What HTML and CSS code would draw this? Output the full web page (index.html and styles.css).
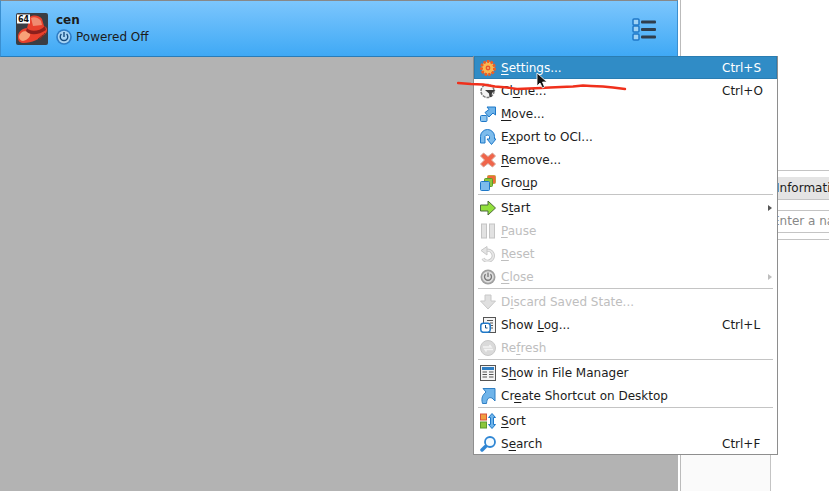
FILE: index.html
```html
<!DOCTYPE html>
<html lang="en">
<head>
  <meta charset="UTF-8">
  <title>VirtualBox Manager</title>
  <link rel="stylesheet" href="styles.css">
</head>
<body>

  <div class="window">
    <div class="left-pane">
      <div class="vm-row">
        <svg class="os-icon" width="32" height="32" viewBox="0 0 32 32">
          <rect width="32" height="32" rx="2" fill="#3a3d44"/>
          <path d="M2 25 C1 19 7 15 11 15 L14 4 C18 1 24 3 26 6 L28 13 C31 14 32 17 30 20 C25 26 15 30 8 30 C4 30 2 28 2 25Z" fill="#e8402c"/>
          <path d="M15 5 C18 3 23 5 25 8 L26 12 L17 13Z" fill="#f08a70"/>
          <path d="M3 24 C4 18 10 17 14 20 C15 23 12 27 7 28 C5 28 3 26 3 24Z" fill="#f8a078"/>
          <path d="M11 15 C14 19 23 19 29 13 L30 17 C23 22 14 23 10 18Z" fill="#8c1f1c"/>
          <path d="M22 26 L27 22 M24 27 L29 20" stroke="#7a2a24" stroke-width="1"/>
          <rect x="1" y="1.500" width="13" height="9" fill="#fff"/>
          <text class="os-badge" x="7.500" y="9">64</text>
        </svg>
        <div class="vm-info">
          <div class="vm-name">cen</div>
          <div class="vm-state">
            <svg width="16" height="16" viewBox="0 0 16 16">
              <circle cx="8" cy="8" r="7.800" fill="#2f7cc4"/>
              <circle cx="8" cy="8" r="6.200" fill="#a8d4f4"/>
              <path d="M5.400 5 A3.800 3.800 0 1 0 10.600 5 M8 3 V8" fill="none" stroke="#164a7c" stroke-width="1.400"/>
            </svg>
            <span>Powered Off</span>
          </div>
        </div>
        <svg class="tools-icon" width="24" height="24" viewBox="0 0 24 24">
          <g fill="#9fd2f5" stroke="#1f78c8" stroke-width="1.500">
            <rect x="1" y="2" width="6" height="6" rx="1"/>
            <rect x="1" y="9" width="6" height="6" rx="1"/>
            <rect x="1" y="17" width="6" height="6" rx="1"/>
          </g>
          <g fill="#2f3d4c">
            <rect x="9" y="3.500" width="15" height="3" rx="1"/>
            <rect x="9" y="11" width="15" height="3" rx="1"/>
            <rect x="9" y="18.500" width="15" height="3" rx="1"/>
          </g>
        </svg>
      </div>
      <div class="vm-empty"></div>
    </div>

    <div class="right-pane">
      <div class="tab-rule"></div>
      <div class="tab-strip">Information</div>
      <div class="name-field">Enter a name</div>
      <div class="details-rule"></div>
      <div class="details-box"></div>
    </div>
  </div>

  <div class="menu">
    <div class="item active">
      <svg class="ico" viewBox="0 0 16 16">
        <circle cx="8" cy="8" r="6.500" fill="#f9c468" stroke="#ee5f24" stroke-width="3" stroke-dasharray="2.500 1.100"/>
        <circle cx="8" cy="8" r="5" fill="#f8b850"/>
        <circle cx="8" cy="8" r="2.400" fill="#e9532a"/>
        <circle cx="8" cy="8" r="0.900" fill="#f9c468"/>
      </svg>
      <span class="label"><u>S</u>ettings...</span><span class="key">Ctrl+S</span>
    </div>
    <div class="item">
      <svg class="ico" viewBox="0 0 16 16">
        <circle cx="7.500" cy="8" r="6.500" fill="#f4f4f4" stroke="#7c7c7c" stroke-width="1.500" stroke-dasharray="3 1"/>
        <path d="M5 7 H15.500 L12 10 L11.500 14 H9.500 L9 10.500Z" fill="#3a3a3a"/>
      </svg>
      <span class="label">Cl<u>o</u>ne...</span><span class="key">Ctrl+O</span>
    </div>
    <div class="item">
      <svg class="ico" viewBox="0 0 16 16">
        <rect x="0.500" y="9.500" width="6.500" height="6" rx="1" fill="#8cc4ee" stroke="#1f78c8"/>
        <path d="M5 6.500 L9 3.500 L7 1 H15.500 V9 L13 7 L9 11Z" fill="#6fb4ea" stroke="#1f78c8"/>
      </svg>
      <span class="label"><u>M</u>ove...</span>
    </div>
    <div class="item">
      <svg class="ico" viewBox="0 0 16 16">
        <path d="M0.500 14 V7.500 A7 7 0 0 1 14.500 7.500 V10 H16 L11.500 15.500 L7 10 H9.500 V7.500 A2.500 2.500 0 0 0 5 7.500 V14Z" fill="#7dbcec" stroke="#1f78c8"/>
      </svg>
      <span class="label">E<u>x</u>port to OCI...</span>
    </div>
    <div class="item">
      <svg class="ico" viewBox="0 0 16 16">
        <path d="M3.500 1 L8 4.500 L12.500 1 L15.500 4 L11.500 8 L15.500 12 L12.500 15 L8 11.500 L3.500 15 L0.500 12 L4.500 8 L0.500 4Z" fill="#f0654a" stroke="#d8a698"/>
      </svg>
      <span class="label"><u>R</u>emove...</span>
    </div>
    <div class="item">
      <svg class="ico" viewBox="0 0 16 16">
        <rect x="7.500" y="0.500" width="8" height="8" rx="1" fill="#f06a3c" stroke="#c8a040"/>
        <rect x="4.500" y="3.500" width="8" height="8" rx="1" fill="#8cc63c" stroke="#5d9a2c"/>
        <rect x="0.500" y="6.500" width="9" height="9" rx="1" fill="#7dbcec" stroke="#1f78c8"/>
      </svg>
      <span class="label">Gro<u>u</u>p</span>
    </div>
    <div class="sep"></div>
    <div class="item">
      <svg class="ico" viewBox="0 0 16 16">
        <path d="M0.500 5 H8 V1 L15.500 8 L8 15 V11 H0.500Z" fill="#92e03c" stroke="#4d6a3a"/>
      </svg>
      <span class="label">S<u>t</u>art</span><span class="sub"></span>
    </div>
    <div class="item off">
      <svg class="ico" viewBox="0 0 16 16">
        <rect x="1.500" y="1" width="5" height="14" fill="#e2e2e2" stroke="#c4c4c4"/>
        <rect x="9.500" y="1" width="5" height="14" fill="#e2e2e2" stroke="#c4c4c4"/>
      </svg>
      <span class="label"><u>P</u>ause</span>
    </div>
    <div class="item off">
      <svg class="ico" viewBox="0 0 16 16">
        <path d="M6 4.500 A5.500 5.500 0 1 1 3 12.500" fill="none" stroke="#c8c8c8" stroke-width="3.400"/>
        <path d="M6 4.500 A5.500 5.500 0 1 1 3 12.500" fill="none" stroke="#e8e8e8" stroke-width="1.600"/>
        <path d="M7 0.500 V9 L1 4.500Z" fill="#e4e4e4" stroke="#c8c8c8"/>
      </svg>
      <span class="label"><u>R</u>eset</span>
    </div>
    <div class="item off">
      <svg class="ico" viewBox="0 0 16 16">
        <circle cx="8" cy="8" r="7.500" fill="#a0a0a0"/>
        <circle cx="8" cy="8" r="5.800" fill="#dedede"/>
        <path d="M5.600 5.200 A3.500 3.500 0 1 0 10.400 5.200 M8 3.400 V8" fill="none" stroke="#777" stroke-width="1.300"/>
      </svg>
      <span class="label"><u>C</u>lose</span><span class="sub off"></span>
    </div>
    <div class="sep"></div>
    <div class="item off">
      <svg class="ico" viewBox="0 0 16 16">
        <path d="M5 1 H11 V7 H15.500 L8 15 L0.500 7 H5Z" fill="#e0e0e0" stroke="#c8c8c8"/>
      </svg>
      <span class="label">D<u>i</u>scard Saved State...</span>
    </div>
    <div class="item">
      <svg class="ico" viewBox="0 0 16 16">
        <rect x="3.500" y="0.500" width="12" height="15" fill="#f4f4f4" stroke="#555"/>
        <path d="M7 3.500 H13 M10 6 H13 M11 8.500 H13 M11 11 H13" stroke="#555"/>
        <rect x="0.800" y="6.300" width="9.400" height="9" rx="2.500" fill="#fff" stroke="#1f78c8" stroke-width="1.500"/>
        <path d="M5.500 8 V11 H7.500" fill="none" stroke="#1a4f80"/>
      </svg>
      <span class="label">Show <u>L</u>og...</span><span class="key">Ctrl+L</span>
    </div>
    <div class="item off">
      <svg class="ico" viewBox="0 0 16 16">
        <circle cx="8" cy="8" r="7.500" fill="#dadada" stroke="#c8c8c8"/>
        <path d="M3 7 H11 L9.500 5 M13 9.500 H5 L6.500 11.500" fill="none" stroke="#f4f4f4" stroke-width="1.500"/>
      </svg>
      <span class="label">Re<u>f</u>resh</span>
    </div>
    <div class="sep"></div>
    <div class="item">
      <svg class="ico" viewBox="0 0 16 16">
        <rect x="0.500" y="0.500" width="15" height="15" fill="#f4f4f4" stroke="#555"/>
        <rect x="2" y="2" width="12" height="3" fill="#2f7fc4"/>
        <path d="M2.500 7 H7 M9 7 H13.500 M2.500 9.500 H7 M9 9.500 H13.500 M2.500 12 H7 M9 12 H13.500" stroke="#555"/>
      </svg>
      <span class="label">S<u>h</u>ow in File Manager</span>
    </div>
    <div class="item">
      <svg class="ico" viewBox="0 0 16 16">
        <path d="M3 0.500 H15 V13 L12 10 C9 9 7 10 6.500 15.500 H2.500 C1 10 2.500 7 6 4Z" fill="#6fb4ea" stroke="#2f7fc4"/>
      </svg>
      <span class="label">Cr<u>e</u>ate Shortcut on Desktop</span>
    </div>
    <div class="sep"></div>
    <div class="item">
      <svg class="ico" viewBox="0 0 16 16">
        <rect x="0.500" y="1" width="6" height="6" fill="#f0a040" stroke="#d9503c"/>
        <rect x="0.500" y="9" width="6" height="6" fill="#8cc63c" stroke="#5d9a2c"/>
        <path d="M12 0.500 L15.500 4.500 H13.500 V11.500 H15.500 L12 15.500 L8.500 11.500 H10.500 V4.500 H8.500Z" fill="#6fb4ea" stroke="#1f78c8"/>
      </svg>
      <span class="label"><u>S</u>ort</span>
    </div>
    <div class="item">
      <svg class="ico" viewBox="0 0 16 16">
        <path d="M2 14 L5.500 10.500" stroke="#2f86d4" stroke-width="3.500" stroke-linecap="round"/>
        <circle cx="10" cy="6" r="5" fill="#f4fbff" stroke="#2f86d4" stroke-width="1.800"/>
      </svg>
      <span class="label">S<u>e</u>arch</span><span class="key">Ctrl+F</span>
    </div>
  </div>

  <svg class="scribble" width="175" height="16" viewBox="0 0 175 16">
    <path d="M1 4 L14 5 L26 5.500 L38 7.500 L50 8.500 L60 10 L72 9.500 L84 9 L93 8.500 L104 8 L116 7.500 L126 6.500 L134 7 L146 7.500 L156 8.500 L168 10" fill="none" stroke="#f0301c" stroke-width="2.400" stroke-linecap="round" stroke-linejoin="round"/>
  </svg>

  <svg class="pointer" width="12" height="18" viewBox="0 0 12 18">
    <path d="M1 1 V14 L4 11 L6.500 16 L8.500 15 L6.500 10 L11 10Z" fill="#111" stroke="#fff" stroke-width="0.800"/>
  </svg>

</body>
</html>
```

FILE: styles.css
```css
html, body {
  margin: 0;
  height: 100%;
  overflow: hidden;
}
body {
  font-family: 'DejaVu Sans', sans-serif;
  font-size: 12px;
  color: #1c1c1c;
  background: #fff;
}
.window {
  display: flex;
  height: 491px;
}
.left-pane {
  width: 678px;
  display: flex;
  flex-direction: column;
}
.vm-row {
  height: 55px;
  display: flex;
  align-items: center;
  padding: 0 21px 0 15px;
  background: linear-gradient(#7cc6fd, #3fa9f5);
  border: 1px solid #2a7cb8;
  border-left-color: #3a8fd0;
  border-right-color: #3a8fd0;
  border-top-color: #888;
}
.os-icon {
  flex: none;
}
.os-badge {
  font-size: 8px;
  font-weight: bold;
  text-anchor: middle;
  fill: #111;
}
.vm-info {
  margin-left: 8px;
  flex: 1;
}
.vm-name {
  font-weight: bold;
  height: 17px;
  line-height: 17px;
}
.vm-state {
  display: flex;
  align-items: center;
  gap: 4px;
  height: 17px;
}
.vm-empty {
  flex: 1;
  background: #b3b3b3;
}
.right-pane {
  flex: 1;
  min-width: 0;
  margin-left: 2px;
  padding-top: 170px;
  border-left: 1px solid #bbb;
  overflow: hidden;
  white-space: nowrap;
}
.tab-rule {
  height: 6px;
  border-top: 1px solid #c4c4c4;
}
.tab-strip {
  height: 22px;
  line-height: 23px;
  margin-left: 95px;
  background: #e4e4e4;
  border-bottom: 1px solid #c4c4c4;
}
.name-field {
  margin: 10px 0 0 95px;
  height: 21px;
  line-height: 21px;
  color: #888;
  border-top: 1px solid #c4c4c4;
  border-bottom: 1px solid #c4c4c4;
  text-indent: -4px;
}
.details-rule {
  height: 1px;
  margin-top: 6px;
  background: #c4c4c4;
}
.details-box {
  height: 251px;
  width: 89px;
  background: #fafafa;
  border-right: 1px solid #c4c4c4;
}

/* context menu sits over the panes */
.menu {
  position: absolute;
  left: 473px;
  top: 56px;
  width: 303px;
  height: 399px;
  background: #fff;
  border: 1px solid #8e8e8e;
  border-top: none;
  border-bottom: none;
  box-shadow: inset 0 -1px 0 #8e8e8e;
}
.item {
  height: 23px;
  display: flex;
  align-items: center;
  padding: 0 15px 0 6px;
}
.item u {
  text-underline-offset: 2px;
}
.item.active {
  background: #308cc6;
  color: #fff;
  box-shadow: inset 0 0 0 1px #2a7db2;
}
.item.off {
  color: #bebebe;
}
.ico {
  width: 16px;
  height: 16px;
  flex: none;
  margin-right: 5px;
}
.label {
  flex: 1;
}
.key {
  width: 40px;
}
.sub {
  width: 0;
  height: 0;
  margin-right: -10px;
  border-left: 4px solid #555;
  border-top: 3px solid transparent;
  border-bottom: 3px solid transparent;
}
.sub.off {
  border-left-color: #bebebe;
}
.sep {
  height: 1px;
  margin: 0 4px 1px 4px;
  background: #c4c4c4;
}
.scribble {
  position: absolute;
  left: 457px;
  top: 79px;
}
.pointer {
  position: absolute;
  left: 536px;
  top: 72px;
}
```
